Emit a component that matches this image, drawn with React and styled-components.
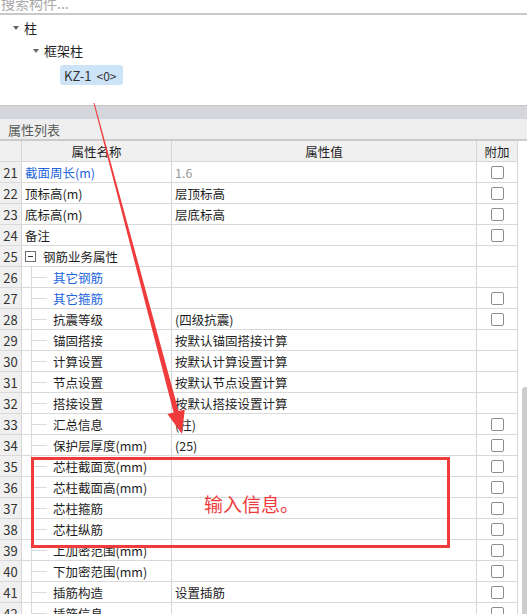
import React from "react";
import styled, { createGlobalStyle } from "styled-components";

const Global = createGlobalStyle`
  html, body { margin: 0; padding: 0; background: #fff; }
  body { width: 527px; height: 614px; overflow: hidden; font-family: "Noto Sans CJK SC", "Noto Sans", sans-serif; }
  * { box-sizing: border-box; }
`;

const Page = styled.div`
  position: relative;
  width: 527px;
  height: 614px;
  overflow: hidden;
  display: flex;
  flex-direction: column;
`;

const Search = styled.div`
  height: 15px;
  border-bottom: 2px solid #c9c9c9;
  overflow: hidden;
  padding-left: 1px;
  font-size: 14px;
  line-height: 14px;
  color: #a8a8a8;
  & > span { display: block; margin-top: -4px; }
`;

const Tree = styled.div`
  height: 91px;
  padding-top: 1px;
  border-bottom: 1px solid #c6c6c6;
  display: flex;
  flex-direction: column;
`;

const Node = styled.div`
  height: 23px;
  display: flex;
  align-items: center;
  padding-left: ${p => p.$indent}px;
  gap: 5px;
  font-size: 13px;
  color: #1e1e1e;
`;

const Caret = styled.span`
  width: 0;
  height: 0;
  border-left: 3px solid transparent;
  border-right: 3px solid transparent;
  border-top: 4px solid #666;
`;

const Chip = styled.div`
  margin: 3px 0 0 60px;
  width: 63px;
  height: 20px;
  border-radius: 3px;
  background: #cce3f8;
  display: flex;
  align-items: center;
  padding-left: 4px;
  font-size: 13px;
  color: #333;
  & small { font-size: 12px; margin-left: 5px; }
`;

const Splitter = styled.div`
  height: 13px;
  background: #d4d6db;
`;

const PanelTitle = styled.div`
  height: 22px;
  background: #eeeeee;
  border-bottom: 2px solid #cbcbcb;
  display: flex;
  align-items: center;
  padding-left: 8px;
  font-size: 13px;
  color: #5a5a5a;
`;

const TableWrap = styled.div`
  flex: 1;
  display: flex;
  min-height: 0;
`;

const Table = styled.div`
  width: 518px;
  display: flex;
  flex-direction: column;
`;

const ScrollTrack = styled.div`
  flex: 1;
  display: flex;
  flex-direction: column;
  align-items: flex-end;
  padding-top: 246px;
`;

const Thumb = styled.div`
  width: 5px;
  flex: 1;
  background: #cdcdcd;
  border-radius: 3px 0 0 0;
`;

const Row = styled.div`
  display: grid;
  grid-template-columns: 22px 150px 305px 41px;
  height: 21px;
  flex-shrink: 0;
  border-bottom: 1px solid #d9d9d9;
  background: ${p => (p.$head ? "#f0f0f0" : "#fff")};
  font-size: 12.5px;
  color: #1e1e1e;
`;

const Cell = styled.div`
  border-right: 1px solid #d6d6d6;
  display: flex;
  align-items: center;
  justify-content: ${p => (p.$center ? "center" : "flex-start")};
  padding-left: ${p => p.$pad || 0}px;
  white-space: nowrap;
  overflow: hidden;
  color: ${p => p.$color || "inherit"};
`;

const NumCell = styled(Cell)`
  background: #f0f0f0;
  justify-content: center;
  font-size: 13px;
  color: #333;
`;

const Branch = styled.span`
  align-self: stretch;
  width: 16px;
  margin-left: 9px;
  margin-right: 6px;
  border-left: 1px solid #dadada;
  background: linear-gradient(#dadada, #dadada) no-repeat 0 50% / 100% 1px;
`;

const Toggle = styled.span`
  width: 11px;
  height: 11px;
  margin: 0 7px 0 3px;
  border: 1px solid #707070;
  display: flex;
  align-items: center;
  justify-content: center;
  &::after { content: ""; width: 5px; height: 1px; background: #333; }
`;

const Check = styled.span`
  width: 13px;
  height: 13px;
  border: 1px solid #8c8c8c;
  border-radius: 2px;
  background: #fff;
`;

const Overlay = styled.svg`
  position: absolute;
  left: 0;
  top: 0;
  pointer-events: none;
`;

const Callout = styled.div`
  position: absolute;
  left: 31px;
  top: 457px;
  width: 419px;
  height: 91px;
  border: 3px solid #ef3b3b;
  display: flex;
  align-items: center;
  padding-left: 170px;
  font-size: 19px;
  color: #ef3b3b;
  padding-top: 2px;
`;

const BLUE = "#2264dc";

const rows = [
  { n: 21, name: "截面周长(m)", value: "1.6", nameColor: BLUE, valueColor: "#9a9a9a", check: true },
  { n: 22, name: "顶标高(m)", value: "层顶标高", check: true },
  { n: 23, name: "底标高(m)", value: "层底标高", check: true },
  { n: 24, name: "备注", value: "", check: true },
  { n: 25, name: "钢筋业务属性", value: "", group: true },
  { n: 26, name: "其它钢筋", value: "", child: true, nameColor: BLUE },
  { n: 27, name: "其它箍筋", value: "", child: true, nameColor: BLUE, check: true },
  { n: 28, name: "抗震等级", value: "(四级抗震)", child: true, check: true },
  { n: 29, name: "锚固搭接", value: "按默认锚固搭接计算", child: true },
  { n: 30, name: "计算设置", value: "按默认计算设置计算", child: true },
  { n: 31, name: "节点设置", value: "按默认节点设置计算", child: true },
  { n: 32, name: "搭接设置", value: "按默认搭接设置计算", child: true },
  { n: 33, name: "汇总信息", value: "(柱)", child: true, check: true },
  { n: 34, name: "保护层厚度(mm)", value: "(25)", child: true, check: true },
  { n: 35, name: "芯柱截面宽(mm)", value: "", child: true, check: true },
  { n: 36, name: "芯柱截面高(mm)", value: "", child: true, check: true },
  { n: 37, name: "芯柱箍筋", value: "", child: true, check: true },
  { n: 38, name: "芯柱纵筋", value: "", child: true, check: true },
  { n: 39, name: "上加密范围(mm)", value: "", child: true, check: true },
  { n: 40, name: "下加密范围(mm)", value: "", child: true, check: true },
  { n: 41, name: "插筋构造", value: "设置插筋", child: true, check: true },
  { n: 42, name: "插筋信息", value: "", child: true, check: true },
];

function PropRow({ r }) {
  return (
    <Row>
      <NumCell>{r.n}</NumCell>
      <Cell $pad={r.child || r.group ? 0 : 3} $color={r.nameColor}>
        {r.group && <Toggle />}
        {r.child && <Branch />}
        {r.name}
      </Cell>
      <Cell $pad={3} $color={r.valueColor}>{r.value}</Cell>
      <Cell $center>{r.check && <Check />}</Cell>
    </Row>
  );
}

export default function App() {
  const sx = 94, sy = 103, tx = 182, ty = 434;
  const dx = tx - sx, dy = ty - sy;
  const L = Math.hypot(dx, dy);
  const ux = dx / L, uy = dy / L;
  const nx = uy, ny = -ux;
  const headLen = 23, headW = 9;
  const bx = tx - ux * headLen, by = ty - uy * headLen;
  const p = (x, y) => `${x.toFixed(1)},${y.toFixed(1)}`;
  const shaft = [
    p(sx + nx * 0.5, sy + ny * 0.5),
    p(bx + nx * 2.6, by + ny * 2.6),
    p(bx + nx * headW, by + ny * headW),
    p(tx, ty),
    p(bx - nx * headW, by - ny * headW),
    p(bx - nx * 2.6, by - ny * 2.6),
    p(sx - nx * 0.5, sy - ny * 0.5),
  ].join(" ");

  return (
    <Page>
      <Global />
      <Search><span>搜索构件...</span></Search>
      <Tree>
        <Node $indent={13}><Caret />柱</Node>
        <Node $indent={33}><Caret />框架柱</Node>
        <Chip>KZ-1<small>&lt;0&gt;</small></Chip>
      </Tree>
      <Splitter />
      <PanelTitle>属性列表</PanelTitle>
      <TableWrap>
        <Table>
          <Row $head>
            <NumCell />
            <Cell $center>属性名称</Cell>
            <Cell $center>属性值</Cell>
            <Cell $center>附加</Cell>
          </Row>
          {rows.map(r => <PropRow key={r.n} r={r} />)}
        </Table>
        <ScrollTrack><Thumb /></ScrollTrack>
      </TableWrap>
      <Callout>输入信息。</Callout>
      <Overlay width="527" height="614" viewBox="0 0 527 614">
        <polygon points={shaft} fill="#ef3b3b" />
      </Overlay>
    </Page>
  );
}
